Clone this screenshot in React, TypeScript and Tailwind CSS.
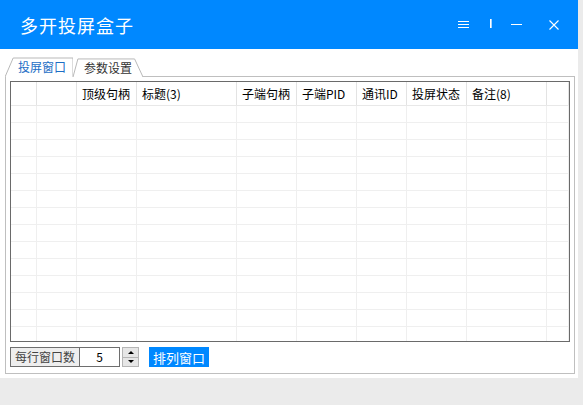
const columns = [
  { w: 'w-[26px]', label: '' },
  { w: 'w-[40px]', label: '' },
  { w: 'w-[60px]', label: '顶级句柄' },
  { w: 'w-[100px]', label: '标题(3)' },
  { w: 'w-[60px]', label: '子端句柄' },
  { w: 'w-[60px]', label: '子端PID' },
  { w: 'w-[50px]', label: '通讯ID' },
  { w: 'w-[60px]', label: '投屏状态' },
  { w: 'w-[80px]', label: '备注(8)' },
  { w: 'flex-1', label: '' },
];

const rows = Array.from({ length: 14 }, (_, i) => i);

function TabShape({ active }: { active: boolean }) {
  // slanted tab outline, drawn behind the label
  return (
    <svg className="absolute inset-0 w-full h-full" viewBox="0 0 100 20" preserveAspectRatio="none">
      <path
        d={active ? 'M0 20 L12 1 L100 1 L100 20' : 'M0 20 L7 1 L88 1 L100 20'}
        fill="#ffffff"
        stroke="#b9b9b9"
        strokeWidth="1"
        vectorEffect="non-scaling-stroke"
      />
    </svg>
  );
}

export default function App() {
  return (
    <div
      className="w-[583px] h-[405px] bg-[#ebebeb] overflow-hidden"
      style={{ fontFamily: '"Noto Sans CJK SC", "Liberation Sans", sans-serif' }}
    >
      <div className="w-[578px] h-[378px] bg-white flex flex-col">
        {/* Title bar */}
        <div className="h-[49px] bg-[#0088ff] flex items-center text-white">
          <span className="ml-[20px] text-[18px] leading-none tracking-[1px]">多开投屏盒子</span>
          <div className="ml-auto flex items-center h-full">
            <div className="w-[11px] flex flex-col gap-[2px] mr-[21px]">
              <div className="h-px bg-white" />
              <div className="h-px bg-white" />
              <div className="h-px bg-white" />
            </div>
            <div className="w-[2px] h-[9px] bg-[#a8d4ff] border-l border-white mr-[19px] -mt-[2px]" />
            <div className="w-[11px] h-px bg-white mr-[27px] -mt-[1px]" />
            <svg width="10" height="10" viewBox="0 0 10 10" className="mr-[19px]">
              <path d="M0.5 0.5 L9.5 9.5 M9.5 0.5 L0.5 9.5" stroke="#ffffff" strokeWidth="1.1" />
            </svg>
          </div>
        </div>

        {/* Tabs */}
        <div className="pl-[5px] pt-[8px] flex h-[27px] text-[12px] leading-none">
          <div className="relative w-[68px] h-[20px] flex items-center justify-center z-10 -mb-px">
            <TabShape active />
            <span className="relative ml-[6px] text-[#1c6ec5]">投屏窗口</span>
          </div>
          <div className="relative w-[70px] h-[19px] mt-px flex items-center justify-center">
            <TabShape active={false} />
            <span className="relative text-[#333333]">参数设置</span>
          </div>
        </div>

        {/* Panel */}
        <div className="ml-[5px] w-[570px] h-[298px] border border-[#bfbfbf] p-[4px] flex flex-col">
          <div className="h-[261px] border border-[#6a6a6a] overflow-hidden">
            <div className="flex h-[24px] border-b border-[#e8e8e8]">
              {columns.map((c, i) => (
                <div
                  key={i}
                  className={`${c.w} shrink-0 border-r border-[#e3e3e3] flex items-center pl-[5px] text-[12px] text-black leading-none`}
                >
                  {c.label}
                </div>
              ))}
            </div>
            {rows.map((r) => (
              <div key={r} className="flex h-[17px] border-b border-[#efefef]">
                {columns.map((c, i) => (
                  <div key={i} className={`${c.w} shrink-0 border-r border-[#efefef]`} />
                ))}
              </div>
            ))}
          </div>

          {/* Controls */}
          <div className="mt-[5px] flex items-center h-[20px] text-[12px] leading-none">
            <div className="w-[70px] h-[20px] border border-[#6e6e6e] bg-[#eeeeee] text-[#444444] flex items-center justify-center">
              每行窗口数
            </div>
            <div className="w-[40px] h-[20px] border border-l-0 border-[#6e6e6e] flex items-center justify-center text-black">
              5
            </div>
            <div className="ml-[2px] w-[17px] h-[20px] flex flex-col border border-[#b5b5b5] bg-[#e6e6e6]">
              <div className="flex-1 flex items-center justify-center border-b border-[#b5b5b5]">
                <div className="w-0 h-0 border-l-[3px] border-r-[3px] border-b-[3px] border-l-transparent border-r-transparent border-b-black" />
              </div>
              <div className="flex-1 flex items-center justify-center">
                <div className="w-0 h-0 border-l-[3px] border-r-[3px] border-t-[3px] border-l-transparent border-r-transparent border-t-black" />
              </div>
            </div>
            <div className="ml-[10px] w-[60px] h-[20px] bg-[#0088ff] text-white flex items-center justify-center text-[13px]">
              排列窗口
            </div>
          </div>
        </div>
      </div>
    </div>
  );
}
